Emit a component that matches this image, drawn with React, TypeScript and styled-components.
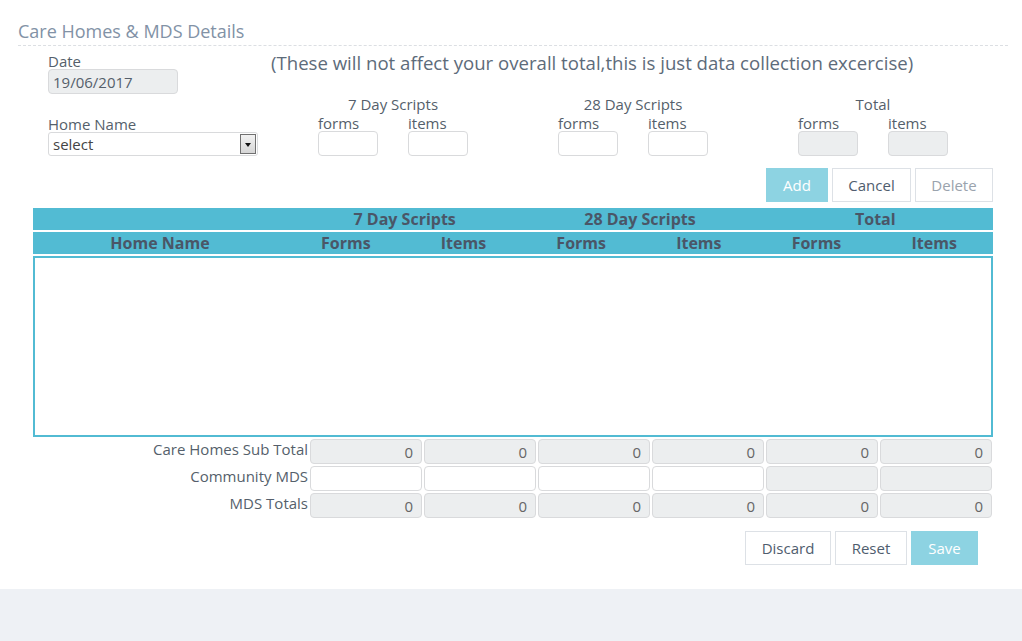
import styled, { createGlobalStyle } from 'styled-components';

const GlobalStyle = createGlobalStyle`
  html, body {
    margin: 0;
    padding: 0;
    background-color: #eef1f5;
    font-family: 'Open Sans', 'Liberation Sans', sans-serif;
    color: #555f6b;
  }
  * {
    box-sizing: border-box;
  }
`;

const columns = ['7 Day Scripts', '28 Day Scripts', 'Total'];

const summaryRows = [
  { label: 'Care Homes Sub Total', values: ['0', '0', '0', '0', '0', '0'], editable: [false, false, false, false, false, false] },
  { label: 'Community MDS', values: ['', '', '', '', '', ''], editable: [true, true, true, true, false, false] },
  { label: 'MDS Totals', values: ['0', '0', '0', '0', '0', '0'], editable: [false, false, false, false, false, false] },
];

const App = () => {
  return (
    <>
      <GlobalStyle />
      <Panel>
        <Title>Care Homes &amp; MDS Details</Title>
        <TopRow>
          <Field>
            <Label>Date</Label>
            <TextBox disabled width={130} value="19/06/2017" readOnly />
          </Field>
          <Note>(These will not affect your overall total,this is just data collection excercise)</Note>
        </TopRow>
        <SecondRow>
          <Field>
            <Label>Home Name</Label>
            <SelectWrap>
              <span>select</span>
              <SelectArrow />
            </SelectWrap>
          </Field>
          {columns.map((col) => (
            <Group key={col}>
              <GroupTitle>{col}</GroupTitle>
              <GroupFields>
                <Field>
                  <Label>forms</Label>
                  <TextBox width={60} disabled={col === 'Total'} readOnly />
                </Field>
                <Field>
                  <Label>items</Label>
                  <TextBox width={60} disabled={col === 'Total'} readOnly />
                </Field>
              </GroupFields>
            </Group>
          ))}
        </SecondRow>
        <ButtonRow>
          <Button variant="primary" width={62}>Add</Button>
          <Button width={79}>Cancel</Button>
          <Button variant="muted" width={78}>Delete</Button>
        </ButtonRow>
        <Table>
          <HeadRow>
            <HeadCell />
            {columns.map((col) => (
              <HeadCell key={col} span={2}>{col}</HeadCell>
            ))}
          </HeadRow>
          <HeadRow>
            <HeadCell>Home Name</HeadCell>
            {columns.map((col) => [
              <HeadCell key={col + 'f'}>Forms</HeadCell>,
              <HeadCell key={col + 'i'}>Items</HeadCell>,
            ])}
          </HeadRow>
          <TableBody />
        </Table>
        <Summary>
          {summaryRows.map((row) => (
            <SummaryRow key={row.label}>
              <SummaryLabel>{row.label}</SummaryLabel>
              {row.values.map((v, i) => (
                <SumBox key={i} editable={row.editable[i]}>{v}</SumBox>
              ))}
            </SummaryRow>
          ))}
        </Summary>
        <FooterRow>
          <Button width={86}>Discard</Button>
          <Button width={72}>Reset</Button>
          <Button variant="primary" width={67}>Save</Button>
        </FooterRow>
      </Panel>
    </>
  );
};

const Panel = styled.div`
  background-color: #fff;
  height: 589px;
  padding: 20px 14px 0 18px;
  box-shadow: 0 1px 3px rgba(0, 0, 0, 0.06);
`;

const Title = styled.div`
  font-size: 18px;
  color: #8292a6;
  padding-bottom: 3px;
  border-bottom: 1px dashed #dcdfe3;
  line-height: 22px;
`;

const TopRow = styled.div`
  display: flex;
  align-items: flex-start;
  padding-left: 30px;
  margin-top: 7px;
`;

const Field = styled.div`
  display: flex;
  flex-direction: column;
`;

const Label = styled.label`
  font-size: 15px;
  line-height: 16px;
  color: #555f6b;
`;

const TextBox = styled.input<{ width: number }>`
  width: ${(p) => p.width}px;
  height: 25px;
  border: 1px solid #d9dadc;
  border-radius: 4px;
  padding: 0 4px;
  font-family: inherit;
  font-size: 15px;
  color: #555f6b;
  background-color: ${(p) => (p.disabled ? '#eceeef' : '#fff')};
  outline: none;
`;

const Note = styled.div`
  font-size: 18.6px;
  color: #5d6b7a;
  margin-left: 93px;
  margin-top: -1px;
  line-height: 22px;
`;

const SecondRow = styled.div`
  display: flex;
  align-items: flex-end;
  padding-left: 30px;
  margin-top: 2px;
`;

const SelectWrap = styled.div`
  position: relative;
  width: 210px;
  height: 24px;
  border: 1px solid #d9dadc;
  border-radius: 3px;
  font-size: 15px;
  line-height: 22px;
  padding-left: 4px;
  color: #444;
`;

const SelectArrow = styled.div`
  position: absolute;
  right: 1px;
  top: 1px;
  width: 16px;
  height: 20px;
  border: 1px solid #707070;
  background: linear-gradient(#f2f2f2, #d6d6d6);
  &::after {
    content: '';
    position: absolute;
    left: 4px;
    top: 8px;
    border-left: 3px solid transparent;
    border-right: 3px solid transparent;
    border-top: 4px solid #111;
  }
`;

const Group = styled.div`
  display: flex;
  flex-direction: column;
  align-items: center;
  width: 150px;
  margin-left: 60px;
  & + & {
    margin-left: 90px;
  }
`;

const GroupTitle = styled.div`
  font-size: 15px;
  line-height: 16px;
  color: #555f6b;
`;

const GroupFields = styled.div`
  display: flex;
  gap: 30px;
  margin-top: 3px;
`;

const ButtonRow = styled.div`
  display: flex;
  justify-content: flex-end;
  gap: 4px;
  margin-top: 12px;
  margin-right: 15px;
`;

const Button = styled.button<{ variant?: 'primary' | 'muted'; width: number }>`
  width: ${(p) => p.width}px;
  height: 34px;
  font-family: inherit;
  font-size: 15px;
  border: 1px solid ${(p) => (p.variant === 'primary' ? '#8dd3e2' : '#dde1e6')};
  background-color: ${(p) => (p.variant === 'primary' ? '#8dd3e2' : '#fff')};
  color: ${(p) => (p.variant === 'primary' ? '#fff' : p.variant === 'muted' ? '#9aa3ad' : '#4f5d6e')};
  cursor: pointer;
`;

const Table = styled.div`
  margin: 6px 15px 0 15px;
  display: flex;
  flex-direction: column;
  gap: 2px;
`;

const HeadRow = styled.div`
  display: grid;
  grid-template-columns: 254px repeat(6, 1fr);
  background-color: #52bbd3;
  height: 22px;
`;

const HeadCell = styled.div<{ span?: number }>`
  grid-column: span ${(p) => p.span || 1};
  text-align: center;
  font-size: 16px;
  font-weight: 700;
  line-height: 22px;
  color: #4a5667;
`;

const TableBody = styled.div`
  height: 181px;
  border: 2px solid #52bbd3;
`;

const Summary = styled.div`
  display: flex;
  flex-direction: column;
  gap: 2px;
  margin: 2px 0 0 15px;
`;

const SummaryRow = styled.div`
  display: grid;
  grid-template-columns: 275px repeat(6, 112px);
  gap: 2px;
`;

const SummaryLabel = styled.div`
  text-align: right;
  font-size: 15px;
  line-height: 20px;
  color: #555f6b;
`;

const SumBox = styled.div<{ editable: boolean }>`
  height: 25px;
  border: 1px solid #d9dadc;
  border-radius: 4px;
  background-color: ${(p) => (p.editable ? '#fff' : '#eceeef')};
  text-align: right;
  padding-right: 8px;
  font-size: 15px;
  line-height: 24px;
  color: #666;
`;

const FooterRow = styled.div`
  display: flex;
  justify-content: flex-end;
  gap: 4px;
  margin-top: 13px;
  margin-right: 30px;
`;

export default App;
